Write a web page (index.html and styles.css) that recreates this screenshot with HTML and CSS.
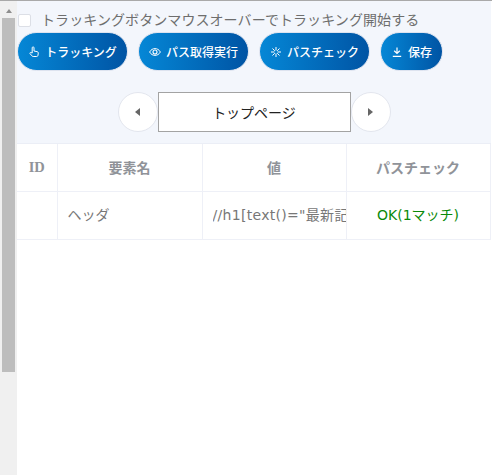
FILE: index.html
```html
<!DOCTYPE html>
<html lang="ja">
<head>
<meta charset="utf-8">
<title>トラッキング</title>
<link rel="stylesheet" href="styles.css">
</head>
<body>
<div class="frame">
  <div class="scrollbar">
    <div class="scroll-up"></div>
    <div class="scroll-thumb"></div>
  </div>
  <main class="main">
    <section class="panel">
      <label class="check-row"><span class="checkbox"></span><span class="check-label">トラッキングボタンマウスオーバーでトラッキング開始する</span></label>
      <div class="buttons">
        <button class="btn btn-wide">
          <svg class="icon" viewBox="0 0 12 12"><path d="M4.2 7V1.8a.9.9 0 0 1 1.8 0V5l3.3.7c.7.2 1.1.7 1 1.4l-.4 2.4c-.1.6-.6 1-1.2 1H5.2c-.5 0-.9-.2-1.2-.6L2 7.6c-.4-.6.4-1.5 1.1-1z" fill="none" stroke="#fff" stroke-width="1"/></svg>
          <span>トラッキング</span>
        </button>
        <button class="btn btn-wide">
          <svg class="icon" viewBox="0 0 12 12"><path d="M.6 6C2 3.6 3.900 2.600 6 2.600S10 3.600 11.400 6C10 8.400 8.100 9.400 6 9.400S2 8.400.6 6z" fill="none" stroke="#fff" stroke-width="1"/><circle cx="6" cy="6" r="2" fill="none" stroke="#fff" stroke-width="1.100"/></svg>
          <span>パス取得実行</span>
        </button>
        <button class="btn btn-wide">
          <svg class="icon" viewBox="0 0 12 12"><path d="M6 1v3.500M6 7.500V11M1 6h3.500M7.500 6H11M2.500 2.500l2.300 2.300M7.200 7.200l2.300 2.300M9.500 2.500L7.200 4.800M4.800 7.200L2.500 9.500" fill="none" stroke="#fff" stroke-width="1"/></svg>
          <span>パスチェック</span>
        </button>
        <button class="btn btn-save">
          <svg class="icon" viewBox="0 0 12 12"><path d="M6 1.500v5.500M3.200 4.800L6 7.500l2.800-2.700M1.800 10.300h8.400" fill="none" stroke="#fff" stroke-width="1.200"/></svg>
          <span>保存</span>
        </button>
      </div>
      <div class="pager">
        <button class="circle"><span class="arrow arrow-left"></span></button>
        <div class="page-name">トップページ</div>
        <button class="circle"><span class="arrow arrow-right"></span></button>
      </div>
    </section>
    <table class="grid">
      <colgroup>
        <col class="col-id"><col class="col-name"><col class="col-value"><col class="col-check">
      </colgroup>
      <thead>
        <tr><th class="th-id">ID</th><th>要素名</th><th>値</th><th>パスチェック</th></tr>
      </thead>
      <tbody>
        <tr>
          <td></td>
          <td class="td-name">ヘッダ</td>
          <td class="td-value"><div class="clip">//h1[text()="最新記事"]</div></td>
          <td class="td-ok">OK(1マッチ)</td>
        </tr>
      </tbody>
    </table>
  </main>
</div>
</body>
</html>
```
FILE: styles.css
```css
* { box-sizing: border-box; }
html, body { margin: 0; height: 100%; overflow: hidden; background: #fff; }
body { font-family: "Noto Sans CJK JP", "Noto Sans", sans-serif; color: #666; }
.frame { display: flex; height: 475px; width: 492px; border-top: 1px solid #a9a9a9; }
.scrollbar { width: 17px; flex: none; background: #f0f0f0; padding: 0 2px; }
.scroll-up { width: 0; height: 0; margin: 8px auto 5px; border: 3.500px solid transparent; border-top: 0; border-bottom: 4px solid #8e8e8e; }
.scroll-thumb { height: 354px; background: #bdbdbd; }
.main { flex: 1; min-width: 0; padding-right: 1px; }
.panel { background: #f3f6fc; height: 143px; padding: 13px 0 0; border-bottom: 1px solid #ebeef6; }
.check-row { display: flex; align-items: center; height: 13px; padding-left: 1px; }
.checkbox { width: 13px; height: 13px; background: #fff; border: 1px solid #dcdfe6; border-radius: 2px; flex: none; }
.check-label { margin: -2px 0 0 10px; font-size: 14px; letter-spacing: 0.080px; line-height: 13px; white-space: nowrap; color: #6e6e6e; }
.buttons { display: flex; gap: 10px; margin-top: 5px; }
.btn { display: flex; align-items: center; justify-content: center; gap: 5px; height: 39px; padding: 0; border: 1px solid #dde3ef; border-radius: 20px; background: linear-gradient(90deg, #0587d6, #0054a4); color: #fff; font: 500 12px "Noto Sans CJK JP", sans-serif; }
.btn-wide { width: 111px; }
.btn-save { width: 63px; }
.icon { width: 12px; height: 12px; flex: none; }
.pager { display: flex; justify-content: center; margin: 21px 0 0; }
.circle { display: flex; align-items: center; justify-content: center; width: 40px; height: 40px; padding: 0; background: #fff; border: 1px solid #e3e6ee; border-radius: 50%; }
.arrow { width: 0; height: 0; border: 4.500px solid transparent; }
.arrow-left { border-left: 0; border-right: 5px solid #666; }
.arrow-right { border-right: 0; border-left: 5px solid #666; }
.page-name { width: 193px; height: 40px; background: #fff; border: 1px solid #a3a3a3; padding-bottom: 1px; display: flex; align-items: center; justify-content: center; font-size: 14px; color: #222; }
.grid { width: 473px; table-layout: fixed; border-collapse: collapse; background: #fff; }
.col-id { width: 40px; }
.col-name { width: 145px; }
.col-value { width: 144px; }
.col-check { width: 144px; }
.grid th, .grid td { padding: 0; border: 1px solid #eef0f7; }
.grid th { height: 47px; }
.grid td { height: 48px; padding-bottom: 2px; }
.grid tr > :first-child { border-left: 0; }
.grid thead th { border-top: 0; }
.grid th { font-size: 14px; font-weight: 700; color: #909399; text-align: center; }
.grid .th-id { font-family: "Liberation Serif", serif; font-size: 14.500px; }
.grid td { font-size: 14px; color: #777; font-family: "DejaVu Sans", "Noto Sans CJK JP", sans-serif; }
.td-name { padding-left: 10px !important; }
.td-value { padding-left: 10px !important; }
.clip { overflow: hidden; white-space: nowrap; letter-spacing: 0.300px; }
.td-ok { text-align: center; color: #0a8a0a !important; }
```
